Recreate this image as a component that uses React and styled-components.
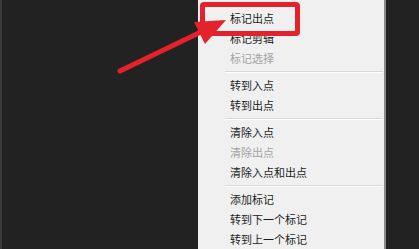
import React from "react";
import styled, { createGlobalStyle } from "styled-components";

const Global = createGlobalStyle`
  html, body { margin: 0; padding: 0; background: #222222; }
  body { width: 419px; height: 249px; overflow: hidden; }
`;

const Page = styled.div`
  position: relative;
  display: flex;
  width: 419px;
  height: 249px;
  background: #222222;
  overflow: hidden;
`;

const LeftPane = styled.div`
  width: 198px;
  flex: none;
  border-left: 2px solid #3a3a3a;
  box-sizing: border-box;
  margin-left: 0;
`;

const Menu = styled.div`
  width: 186px;
  flex: none;
  background: #f0f0f0;
  border-right: 2px solid #8a8a8a;
  padding-top: 8px;
  display: flex;
  flex-direction: column;
  font-family: "Noto Sans CJK SC", "Microsoft YaHei", sans-serif;
  font-size: 11px;
`;

const Item = styled.div`
  height: 20px;
  line-height: 20px;
  padding-left: 32px;
  color: ${(p) => (p.$disabled ? "#a3a3a3" : "#1c1c1c")};
  white-space: nowrap;
`;

const Separator = styled.div`
  height: 7px;
  display: flex;
  align-items: center;
  padding-left: 27px;
  padding-right: 1px;
  &::before {
    content: "";
    flex: 1;
    height: 1px;
    background: #d9d9d9;
    border-bottom: 1px solid #ffffff;
  }
`;

const Overlay = styled.svg`
  position: absolute;
  left: 0;
  top: 0;
  pointer-events: none;
`;

const groups = [
  [
    { t: "标记出点" },
    { t: "标记剪辑" },
    { t: "标记选择", d: true },
  ],
  [{ t: "转到入点" }, { t: "转到出点" }],
  [{ t: "清除入点" }, { t: "清除出点", d: true }, { t: "清除入点和出点" }],
  [{ t: "添加标记" }, { t: "转到下一个标记" }, { t: "转到上一个标记" }],
];

export default function App() {
  return (
    <>
      <Global />
      <Page>
        <LeftPane />
        <Menu>
          {groups.map((g, gi) => (
            <React.Fragment key={gi}>
              {gi > 0 && <Separator />}
              {g.map((it) => (
                <Item key={it.t} $disabled={it.d}>
                  {it.t}
                </Item>
              ))}
            </React.Fragment>
          ))}
        </Menu>
        <Overlay width="419" height="249" viewBox="0 0 419 249">
          <rect x="202.5" y="4.5" width="95" height="29" fill="none" stroke="#e4222b" strokeWidth="5" rx="1.5" />
          <line x1="120" y1="71" x2="205" y2="30" stroke="#e4222b" strokeWidth="5" strokeLinecap="round" />
          <polygon points="194,22 226,20 205,44" fill="#e4222b" />
        </Overlay>
      </Page>
    </>
  );
}
